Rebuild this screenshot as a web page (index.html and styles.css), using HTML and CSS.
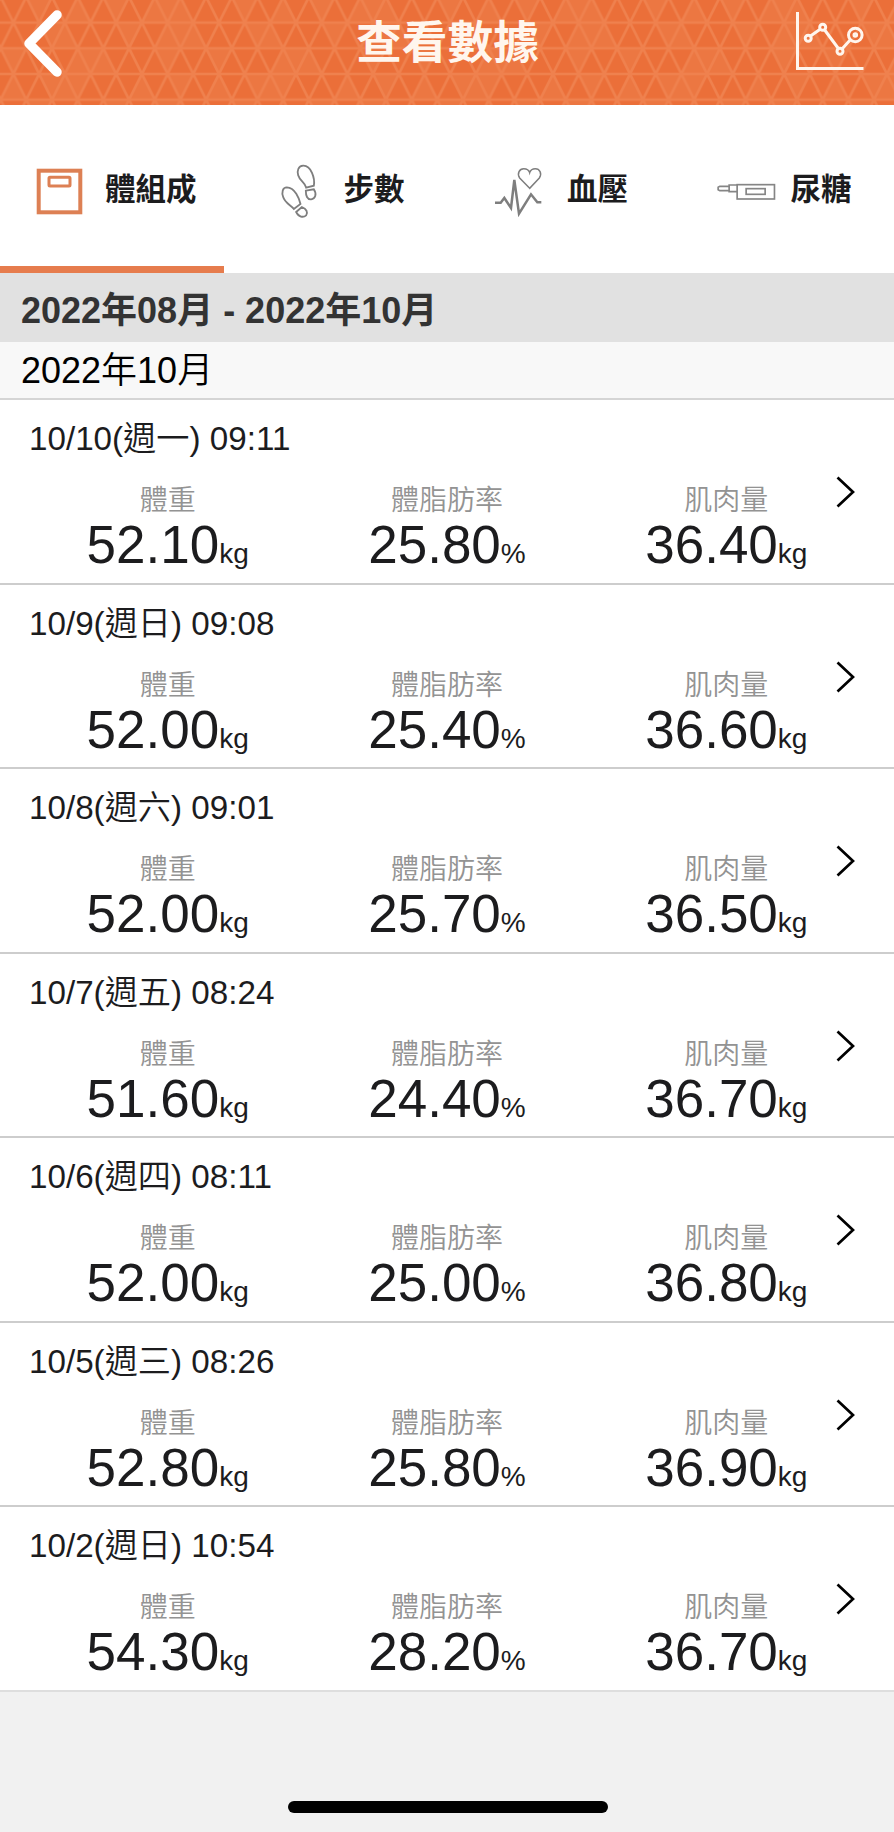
FILE: index.html
```html
<!DOCTYPE html>
<html lang="zh-Hant">
<head>
  <meta charset="UTF-8">
  <meta name="viewport" content="width=device-width, initial-scale=1.0">
  <title>查看數據</title>
  <link rel="stylesheet" href="styles.css">
</head>
<body>
  <header class="header">
    <svg class="header-pattern" width="894" height="105">
      <defs>
        <pattern id="tints" width="160" height="80" patternUnits="userSpaceOnUse" patternTransform="translate(0.6 -3.1) scale(1.2845)">
          <rect width="160" height="80" fill="#eb6f39"/>
          <path fill="#ec7742" d="M20 0H40L30 20ZM60 0L50 20H70ZM80 0H100L90 20ZM120 0L110 20H150L140 0ZM30 20H50L40 40ZM50 20L40 40H60ZM90 20H110L100 40ZM130 20L120 40H160L150 20ZM0 40H20L10 60ZM60 40L50 60H90L80 40ZM120 40H140L130 60ZM10 60L0 80H20ZM30 60H70L60 80H40ZM110 60L100 80H120ZM130 60H150L140 80Z"/>
        </pattern>
        <pattern id="lines" width="20" height="40" patternUnits="userSpaceOnUse" patternTransform="translate(0.6 -3.1) scale(1.2845)">
          <path fill="none" stroke="#ef814e" stroke-width="2" d="M-2 0H22M-2 20H22M-2 40H22M-2 -4L22 44M22 -4L-2 44"/>
        </pattern>
      </defs>
      <rect width="894" height="105" fill="url(#tints)"/>
      <rect width="894" height="105" fill="url(#lines)"/>
    </svg>
    <svg class="back-icon" width="40" height="68" viewBox="0 0 40 68">
      <path d="M34 6L6 34.5L34 63" fill="none" stroke="#fff" stroke-width="9.5" stroke-linecap="round" stroke-linejoin="round"/>
    </svg>
    <h1 class="header-title">查看數據</h1>
    <svg class="chart-icon" width="68" height="58" viewBox="0 0 68 58" fill="none" stroke="#fff6ee" stroke-width="3">
      <path d="M1.5 0V56.5H67.5"/>
      <path d="M14.5 24L24.500 17M28.700 18L42 36M46 37L55 27"/>
      <circle cx="12.200" cy="26.300" r="3"/>
      <circle cx="26.700" cy="15.300" r="3"/>
      <circle cx="44" cy="39.300" r="3"/>
      <circle cx="59.300" cy="23" r="6.800"/>
      <circle cx="59.300" cy="23" r="1.300"/>
    </svg>
  </header>

  <nav class="tabs">
    <div class="tab tab-body active">
      <svg class="tab-icon" viewBox="30 159 60 60" fill="none" stroke="#dd8054">
        <rect x="38.700" y="170.700" width="41.600" height="41.600" stroke-width="4"/>
        <rect x="49" y="177.300" width="21" height="8.700" rx="1" stroke-width="3"/>
      </svg>
      <span>體組成</span>
    </div>
    <div class="tab">
      <svg class="tab-icon" viewBox="269.500 159 60 60">
        <g transform="translate(270 155) scale(0.3333)" fill="none" stroke="#7e7e7e" stroke-width="5.500">
          <path d="M107 98L130 92C134 70 122 31 98 32C83 33 79 48 83 61C88 78 104 83 107 98Z"/>
          <path d="M106 107L130 103C140 118 134 132 122 133C110 134 106 122 106 107Z"/>
          <path d="M70 162L90 147C86 130 74 98 49 97C36 97 33 112 38 126C44 145 60 149 70 162Z"/>
          <path d="M77 171L94 156C108 162 113 172 107 181C98 189 84 186 77 171Z"/>
        </g>
      </svg>
      <span>步數</span>
    </div>
    <div class="tab">
      <svg class="tab-icon" viewBox="493 159 60 60">
        <g transform="translate(480 120) scale(0.3333)" fill="none" stroke="#7e7e7e">
          <path d="M45 248H62L73 234L93 264L103 180L117 281L153 223L172 247H184" stroke-width="7.500"/>
          <path d="M149 205L119 174C110 160 119 146 131 146C141 146 147 151 149 158C151 151 157 146 166 146C179 146 187 160 178 174Z" stroke-width="4.500"/>
        </g>
      </svg>
      <span>血壓</span>
    </div>
    <div class="tab">
      <svg class="tab-icon" viewBox="716.500 159 60 60">
        <g transform="translate(480 120) scale(0.3333)" fill="none" stroke="#858585" stroke-width="5">
          <rect x="770" y="194" width="112" height="43"/>
          <rect x="797" y="206" width="57" height="17"/>
          <path d="M770 195H746V215H770"/>
          <path d="M746 199H718L713 202V209L718 212H746"/>
        </g>
      </svg>
      <span>尿糖</span>
    </div>
  </nav>

  <h2 class="range">2022年08月 - 2022年10月</h2>
  <h3 class="month">2022年10月</h3>

  <ul class="records" id="records">
    <!-- Records will be populated here -->
  </ul>

  <footer class="footer">
    <div class="home-bar"></div>
  </footer>

  <script>
    const records = [
      { date: '10/10(週一) 09:11', weight: '52.10', fat: '25.80', muscle: '36.40' },
      { date: '10/9(週日) 09:08', weight: '52.00', fat: '25.40', muscle: '36.60' },
      { date: '10/8(週六) 09:01', weight: '52.00', fat: '25.70', muscle: '36.50' },
      { date: '10/7(週五) 08:24', weight: '51.60', fat: '24.40', muscle: '36.70' },
      { date: '10/6(週四) 08:11', weight: '52.00', fat: '25.00', muscle: '36.80' },
      { date: '10/5(週三) 08:26', weight: '52.80', fat: '25.80', muscle: '36.90' },
      { date: '10/2(週日) 10:54', weight: '54.30', fat: '28.20', muscle: '36.70' }
    ];

    // Build one label/value column
    function metric(label, value, unit) {
      return `
        <div class="metric">
          <div class="metric-label">${label}</div>
          <div class="metric-value">${value}<span class="unit">${unit}</span></div>
        </div>
      `;
    }

    const list = document.getElementById('records');
    records.forEach(record => {
      const item = document.createElement('li');
      item.className = 'record';
      item.innerHTML = `
        <div class="record-date">${record.date}</div>
        <div class="metrics">
          ${metric('體重', record.weight, 'kg')}
          ${metric('體脂肪率', record.fat, '%')}
          ${metric('肌肉量', record.muscle, 'kg')}
        </div>
        <svg class="chevron" width="20" height="32" viewBox="0 0 20 32">
          <path d="M1.500 1.500L17 16L1.500 30.500" fill="none" stroke="#000" stroke-width="2.700"/>
        </svg>
      `;
      list.appendChild(item);
    });
  </script>
</body>
</html>
```

FILE: styles.css
```css
/* Global Styles */
* {
  box-sizing: border-box;
}

body {
  display: flex;
  flex-direction: column;
  height: 1832px;
  margin: 0;
  background-color: #f1f1f1;
  color: #1c1c1e;
  font-family: "Liberation Sans", "Noto Sans CJK TC", sans-serif;
}

/* Header */
.header {
  position: relative;
  display: flex;
  justify-content: space-between;
  height: 105px;
  padding: 0 30px 0 23px;
  background-color: #eb6f39;
}

.header-pattern {
  position: absolute;
  top: 0;
  left: 0;
}

.back-icon,
.header-title,
.chart-icon {
  position: relative;
}

.back-icon {
  margin-top: 9px;
  margin-right: 36px;
}

.header-title {
  margin: 0;
  color: #fff6ee;
  font-size: 45.7px;
  line-height: 87px;
}

.chart-icon {
  margin-top: 12px;
}

/* Tabs */
.tabs {
  display: grid;
  grid-template-columns: repeat(4, 1fr);
  height: 168px;
  background-color: #fff;
}

.tab {
  display: flex;
  align-items: center;
  gap: 14px;
  padding: 7px 0 0 46px;
  border-bottom: 7px solid transparent;
  font-size: 30.5px;
  font-weight: bold;
  line-height: 44px;
  white-space: nowrap;
}

.tab-body {
  gap: 15px;
  padding-left: 30px;
}

.tab.active {
  border-bottom-color: #e67c4d;
}

.tab-icon {
  flex: none;
  width: 60px;
  height: 60px;
}

/* Period headings */
.range {
  height: 69px;
  margin: 0;
  padding-left: 21px;
  background-color: #e1e1e1;
  color: #333;
  font-size: 36px;
  line-height: 76px;
}

.month {
  height: 58px;
  margin: 0;
  padding-left: 21px;
  border-bottom: 2px solid #d5d5d5;
  background-color: #f8f8f8;
  color: #000;
  font-size: 36px;
  font-weight: 350;
  line-height: 58px;
}

/* Records */
.records {
  margin: 0;
  padding: 0;
  list-style: none;
}

.record {
  position: relative;
  height: 184.57px;
  padding: 19px 28px 0;
  border-bottom: 2px solid #cdcdcd;
  background-color: #fff;
}

.record:last-child {
  border-bottom-color: #dedede;
}

.record-date {
  height: 62px;
  padding-left: 1px;
  font-size: 33.2px;
  font-weight: 350;
  line-height: 40px;
}

.metrics {
  display: grid;
  grid-template-columns: repeat(3, 1fr);
  text-align: center;
}

.metric-label {
  color: #939393;
  font-size: 28px;
  font-weight: 350;
  line-height: 40px;
}

.metric-value {
  margin-top: -1px;
  font-size: 53px;
  line-height: 50px;
}

.unit {
  font-size: 28px;
}

.chevron {
  position: absolute;
  top: 76px;
  right: 38px;
}

/* Bottom area */
.footer {
  display: flex;
  flex: 1;
  align-items: flex-end;
  justify-content: center;
  padding: 0 0 19px 2px;
}

.home-bar {
  width: 320px;
  height: 12px;
  border-radius: 6px;
  background-color: #000;
}
```
